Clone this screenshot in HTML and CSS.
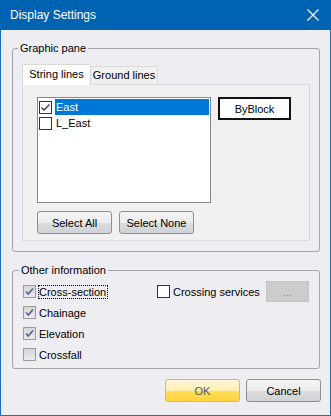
FILE: index.html
```html
<!DOCTYPE html>
<html lang="en">

<head>
  <meta charset="UTF-8">
  <meta name="viewport" content="width=device-width, initial-scale=1.0">
  <title>Display Settings</title>
  <link rel="stylesheet" href="styles.css">
</head>

<body>
  <div class="window">
    <div class="titlebar">
      <span class="title">Display Settings</span>
      <svg class="close" width="12" height="12" viewBox="0 0 12 12">
        <path d="M0.5 0.5 L11.5 11.5 M11.5 0.5 L0.5 11.5" stroke="#fff" stroke-width="1.2" fill="none" />
      </svg>
    </div>

    <div class="content">
      <!-- 图形面板 -->
      <fieldset class="group graphic">
        <legend>Graphic pane</legend>
        <div class="tabs">
          <div class="tab active">String lines</div>
          <div class="tab">Ground lines</div>
        </div>
        <div class="tab-panel">
          <div class="pane-row">
            <div class="listbox">
              <div class="item">
                <span class="lb-check">
                  <svg width="11" height="11" viewBox="0 0 11 11">
                    <polyline points="1.5,5.5 4,8 9.5,2.5" stroke="#333" stroke-width="1.3" fill="none" />
                  </svg>
                </span>
                <span class="item-text selected">East</span>
              </div>
              <div class="item">
                <span class="lb-check"></span>
                <span class="item-text">L_East</span>
              </div>
            </div>
            <button class="btn default">ByBlock</button>
          </div>
          <div class="btn-row">
            <button class="btn">Select All</button>
            <button class="btn">Select None</button>
          </div>
        </div>
      </fieldset>

      <!-- 其他信息 -->
      <fieldset class="group other">
        <legend>Other information</legend>
        <div class="other-grid">
          <div class="col">
            <div class="check-row">
              <span class="cb checked">
                <svg width="11" height="11" viewBox="0 0 11 11">
                  <polyline points="2,5.5 4.3,8 9,2.5" stroke="#4c6290" stroke-width="1.6" fill="none" />
                </svg>
              </span>
              <span class="label focus">Cross-section</span>
            </div>
            <div class="check-row">
              <span class="cb checked">
                <svg width="11" height="11" viewBox="0 0 11 11">
                  <polyline points="2,5.5 4.3,8 9,2.5" stroke="#4c6290" stroke-width="1.6" fill="none" />
                </svg>
              </span>
              <span class="label">Chainage</span>
            </div>
            <div class="check-row">
              <span class="cb checked">
                <svg width="11" height="11" viewBox="0 0 11 11">
                  <polyline points="2,5.5 4.3,8 9,2.5" stroke="#4c6290" stroke-width="1.6" fill="none" />
                </svg>
              </span>
              <span class="label">Elevation</span>
            </div>
            <div class="check-row">
              <span class="cb"></span>
              <span class="label">Crossfall</span>
            </div>
          </div>
          <div class="col">
            <div class="check-row">
              <span class="cb white"></span>
              <span class="label">Crossing services</span>
              <button class="btn disabled">...</button>
            </div>
          </div>
        </div>
      </fieldset>

      <div class="footer">
        <button class="btn ok">OK</button>
        <button class="btn">Cancel</button>
      </div>
    </div>
  </div>
</body>

</html>
```

FILE: styles.css
```css
* {
  box-sizing: border-box;
}

body {
  margin: 0;
  font-family: "Liberation Sans", Arial, sans-serif;
  font-size: 11px;
  color: #000;
}

.window {
  width: 331px;
  height: 416px;
  border: 1px solid #1a6ec0;
  border-top: 0;
  background-color: #eeedf2;
}

.titlebar {
  height: 30px;
  margin: 0 -1px;
  padding: 0 12px 0 10px;
  display: flex;
  align-items: center;
  justify-content: space-between;
  background-color: #0063b1;
  color: #fff;
}

.title {
  font-size: 12px;
}

.content {
  padding: 11px 0 0 11px;
}

.group {
  width: 308px;
  margin: 0;
  min-width: 0;
  border: 1px solid #a4a4aa;
  border-radius: 3px;
}

.group legend {
  margin-left: -4px;
  padding: 0 2px;
  line-height: 14px;
}

.graphic {
  padding: 9px 9px 10px 9px;
}

.tabs {
  display: flex;
  align-items: flex-end;
  height: 20px;
}

.tab {
  width: 68px;
  height: 18px;
  line-height: 16px;
  text-align: center;
  border: 1px solid #d9d9d9;
  border-bottom: 0;
  background-color: #f0f0f0;
}

.tab.active {
  height: 21px;
  margin-bottom: -1px;
  line-height: 19px;
  background-color: #fff;
  border-right: 0;
  position: relative;
  z-index: 1;
}

.tab-panel {
  height: 157px;
  padding: 12px 0 6px 14px;
  border: 1px solid #d9d9d9;
  background-color: #f0f0f0;
}

.pane-row {
  display: flex;
  align-items: flex-start;
  gap: 7px;
}

.listbox {
  width: 174px;
  height: 106px;
  padding: 1px;
  border: 1px solid #828790;
  background-color: #fff;
}

.item {
  height: 16px;
  display: flex;
  align-items: center;
}

.lb-check {
  width: 13px;
  height: 13px;
  border: 1px solid #333;
  background-color: #fff;
  display: flex;
}

.item-text {
  flex: 1;
  margin-left: 3px;
  padding-left: 1px;
  height: 16px;
  line-height: 16px;
}

.item-text.selected {
  background-color: #0078d7;
  color: #fff;
}

.btn {
  width: 75px;
  height: 23px;
  padding: 0;
  font-family: inherit;
  font-size: 11px;
  color: #000;
  border: 1px solid #8e8f8f;
  border-radius: 3px;
  background: linear-gradient(#f4f4f4 0%, #ececec 50%, #dcdcdc 51%, #cfd2d6 100%);
}

.btn.default {
  width: 73px;
  border: 2px solid #111;
  border-radius: 0;
  background: #fff;
}

.btn-row {
  display: flex;
  gap: 7px;
  margin-top: 8px;
}

.other {
  margin-top: 11px;
  padding: 4px 10px 3px 10px;
}

.other-grid {
  display: grid;
  grid-template-columns: 134px 1fr;
}

.check-row {
  height: 21px;
  display: flex;
  align-items: center;
}

.cb {
  width: 13px;
  height: 13px;
  border: 1px solid #9a9a9a;
  background: linear-gradient(#d6d6d6, #eaeaea);
  display: flex;
}

.cb.white {
  border-color: #333;
  background: #fff;
}

.label {
  margin-left: 2px;
  padding: 0 1px 0 0;
  line-height: 12px;
  border: 1px solid transparent;
}

.label.focus {
  border: 1px dotted #000;
}

.btn.disabled {
  width: 43px;
  height: 21px;
  margin-left: auto;
  color: #8a8a8a;
  border-color: #c4c4c4;
  border-radius: 0;
  background: #cccccc;
}

.footer {
  width: 309px;
  margin-top: 10px;
  display: flex;
  justify-content: flex-end;
  gap: 6px;
}

.btn.ok {
  color: #555;
  border-color: #d8b95c;
  background: linear-gradient(#fff7dc 0%, #ffeeb0 50%, #ffdd5c 51%, #ffd43c 100%);
}
```
